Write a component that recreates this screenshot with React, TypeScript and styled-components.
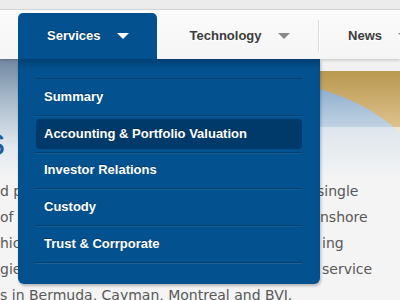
import React from 'react';
import styled, { createGlobalStyle } from 'styled-components';

const GlobalStyle = createGlobalStyle`
  html, body {
    margin: 0;
    padding: 0;
    background: #f4f4f4;
    overflow: hidden;
  }
  body {
    width: 400px;
    height: 300px;
  }
`;

const Page = styled.div`
  position: relative;
  width: 400px;
  height: 300px;
  overflow: hidden;
  background: #f4f4f4;
`;

const TopStrip = styled.div`
  height: 9px;
  background: #ececec;
  border-bottom: 1px solid #dcdcdc;
`;

const Nav = styled.nav`
  position: relative;
  z-index: 2;
  display: flex;
  align-items: flex-end;
  height: 49px;
  padding-left: 18px;
  background: linear-gradient(#fbfbfb, #f5f5f5);
  box-shadow: 0 1px 3px rgba(0, 0, 0, 0.2);
  font-family: 'Liberation Sans', Arial, sans-serif;
`;

const NavItem = styled.div<{ active?: boolean; width: number; pad: number }>`
  position: relative;
  box-sizing: border-box;
  display: flex;
  align-items: center;
  gap: 16px;
  width: ${({ width }) => width}px;
  height: ${({ active }) => (active ? 46 : 49)}px;
  padding-left: ${({ pad }) => pad}px;
  padding-top: ${({ active }) => (active ? 0 : 2)}px;
  font-size: 13px;
  font-weight: bold;
  color: ${({ active }) => (active ? '#ffffff' : '#3c3c3c')};
  background: ${({ active }) => (active ? '#03518f' : 'transparent')};
  border-radius: ${({ active }) => (active ? '5px 5px 0 0' : '0')};
  text-shadow: ${({ active }) => (active ? '0 -1px 0 rgba(0,0,0,0.35)' : '0 1px 0 #fff')};
`;

const NavLabel = styled.span<{ active?: boolean }>`
  margin-top: ${({ active }) => (active ? -2 : 0)}px;
`;

const Caret = styled.span<{ active?: boolean }>`
  width: 0;
  height: 0;
  border-left: 6px solid transparent;
  border-right: 6px solid transparent;
  border-top: 6px solid ${({ active }) => (active ? '#ffffff' : '#8a8a8a')};
`;

const Divider = styled.div`
  align-self: center;
  width: 1px;
  height: 32px;
  margin-top: 2px;
  background: #dadada;
  box-shadow: 1px 0 0 #ffffff;
`;

const Dropdown = styled.div`
  position: absolute;
  left: 0;
  top: 100%;
  box-sizing: border-box;
  width: 302px;
  padding: 19px 18px 21px 17px;
  background: #03528f;
  border-radius: 0 0 6px 6px;
  box-shadow: inset 0 9px 8px -5px rgba(0, 20, 50, 0.35), 1px 2px 3px rgba(0, 0, 0, 0.25);
  font-family: 'Liberation Sans', Arial, sans-serif;
  text-shadow: 0 -1px 0 rgba(0, 0, 0, 0.3);
`;

const MenuList = styled.ul`
  list-style: none;
  margin: 0;
  padding: 0;
  border-top: 1px solid #02406f;
  box-shadow: 0 1px 0 rgba(255, 255, 255, 0.05);
`;

const MenuItem = styled.li`
  height: 35.8px;
  display: flex;
  align-items: stretch;
  border-bottom: 1px solid #02406f;
  box-shadow: 0 1px 0 rgba(255, 255, 255, 0.06);
`;

const MenuLink = styled.a<{ selected?: boolean }>`
  flex: 1;
  display: flex;
  align-items: center;
  margin: ${({ selected }) => (selected ? '3px 0 3px 1px' : '0')};
  padding-left: ${({ selected }) => (selected ? 8 : 9)}px;
  padding-bottom: 1px;
  border-radius: 4px;
  background: ${({ selected }) => (selected ? '#003a6a' : 'transparent')};
  color: #ffffff;
  font-size: 13px;
  font-weight: bold;
  text-decoration: none;
`;

const Banner = styled.div`
  position: relative;
  height: 121px;
  margin-top: -2px;
`;

const BannerArt = styled.svg`
  display: block;
`;

const Heading = styled.h1`
  position: absolute;
  right: 395px;
  top: 66px;
  margin: 0;
  font-family: 'Liberation Sans', Arial, sans-serif;
  font-size: 38px;
  font-weight: normal;
  color: #1c5d9c;
  line-height: 1;
  white-space: nowrap;
`;

const Body = styled.div`
  font-family: 'DejaVu Sans', 'Trebuchet MS', sans-serif;
  font-size: 14px;
  color: #585858;
`;

const Line = styled.div<{ split: number }>`
  display: grid;
  grid-template-columns: ${({ split }) => split}px 1fr;
  height: 26px;
  line-height: 26px;
  white-space: nowrap;
`;

const LineStart = styled.span`
  overflow: hidden;
`;

const LineEnd = styled.span``;

const menu = [
  'Summary',
  'Accounting & Portfolio Valuation',
  'Investor Relations',
  'Custody',
  'Trust & Corrporate',
];

const lines: { start: string; end: string; split: number }[] = [
  { start: 'd provider of', end: 'single', split: 317 },
  { start: ' of services', end: 'nshore', split: 320 },
  { start: 'hich combine', end: 'ing', split: 322 },
  { start: 'gies with a', end: 'service', split: 322 },
];

const App = () => (
  <Page>
    <GlobalStyle />
    <TopStrip />
    <Nav>
      <NavItem active width={139} pad={29}>
        <NavLabel active>Services</NavLabel>
        <Caret active />
        <Dropdown>
          <MenuList>
            {menu.map((label, i) => (
              <MenuItem key={label}>
                <MenuLink href="#" selected={i === 1}>
                  {label}
                </MenuLink>
              </MenuItem>
            ))}
          </MenuList>
        </Dropdown>
      </NavItem>
      <NavItem width={162} pad={33}>
        <NavLabel>Technology</NavLabel>
        <Caret />
      </NavItem>
      <Divider />
      <NavItem width={81} pad={29}>
        <NavLabel>News</NavLabel>
        <Caret />
      </NavItem>
    </Nav>
    <Banner>
      <BannerArt width="400" height="121" viewBox="0 0 400 121">
        <defs>
          <linearGradient id="sky" x1="0" y1="0" x2="0" y2="1">
            <stop offset="0" stopColor="#6c859f" />
            <stop offset="0.35" stopColor="#a9bacb" />
            <stop offset="0.75" stopColor="#e3e9ef" />
            <stop offset="1" stopColor="#f4f4f4" />
          </linearGradient>
          <linearGradient id="gold" x1="0" y1="0" x2="0" y2="1">
            <stop offset="0" stopColor="#b8974f" />
            <stop offset="0.5" stopColor="#dcc08a" />
            <stop offset="1" stopColor="#efe2c4" />
          </linearGradient>
          <linearGradient id="wave" x1="0" y1="0" x2="0" y2="1">
            <stop offset="0" stopColor="#8fb0cf" />
            <stop offset="0.5" stopColor="#c9d8e6" />
            <stop offset="1" stopColor="#f3f4f5" />
          </linearGradient>
        </defs>
        <rect x="0" y="0" width="400" height="121" fill="url(#sky)" />
        <rect x="320" y="0" width="80" height="121" fill="#f1f1f1" />
        <rect x="320" y="14" width="80" height="107" fill="url(#gold)" />
        <path d="M320 76 L400 70 L400 84 Q360 84 320 96 Z" fill="#f2e6cb" opacity="0.5" />
        <path d="M320 32 Q370 47 400 76 L400 121 L320 121 Z" fill="url(#wave)" />
        <rect x="320" y="70" width="80" height="51" fill="#f4f4f4" opacity="0.55" />
      </BannerArt>
      <Heading>Services</Heading>
    </Banner>
    <Body>
      {lines.map((l) => (
        <Line key={l.end} split={l.split}>
          <LineStart>{l.start}</LineStart>
          <LineEnd>{l.end}</LineEnd>
        </Line>
      ))}
      <Line split={400}>
        <LineStart>s in Bermuda, Cayman, Montreal and BVI.</LineStart>
        <LineEnd />
      </Line>
    </Body>
  </Page>
);

export default App;
